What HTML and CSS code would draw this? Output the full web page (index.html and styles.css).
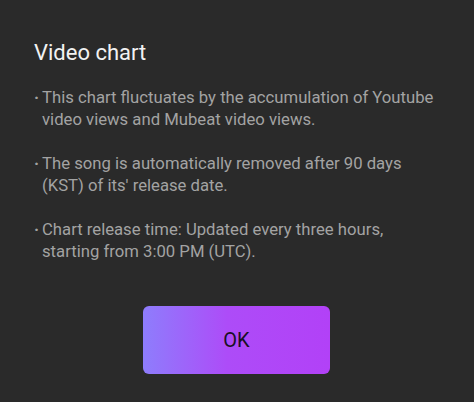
FILE: index.html
```html
<!DOCTYPE html>
<html lang="en">
<head>
    <meta charset="UTF-8">
    <meta name="viewport" content="width=device-width, initial-scale=1.0">
    <title>Video chart</title>
    <link rel="stylesheet" href="styles.css">
</head>
<body>
    <div class="dialog">
        <h1>Video chart</h1>
        <ul class="notes">
            <li><span class="dot">·</span><span>This chart fluctuates by the accumulation of Youtube video views and Mubeat video views.</span></li>
            <li><span class="dot">·</span><span>The song is automatically removed after 90 days (KST) of its' release date.</span></li>
            <li><span class="dot">·</span><span>Chart release time: Updated every three hours, starting from 3:00 PM (UTC).</span></li>
        </ul>
        <div class="actions">
            <button type="button" class="ok-btn">OK</button>
        </div>
    </div>
</body>
</html>
```

FILE: styles.css
```css
body {
    font-family: Roboto, "Noto Sans", sans-serif;
    background-color: #2a2a2a;
    color: #a3a3a3;
    margin: 0;
    padding: 0;
}
.dialog {
    padding: 39px 36px 0 34px;
}
h1 {
    margin: 0;
    font-size: 22px;
    font-weight: 400;
    color: #f2f2f2;
    line-height: 28px;
}
.notes {
    list-style: none;
    margin: 20px 0 0 0;
    padding: 0;
    font-size: 16.7px;
    line-height: 22px;
}
.notes li {
    display: flex;
    margin-bottom: 22px;
}
.dot {
    width: 8px;
    flex: none;
    font-weight: 700;
}
.actions {
    padding-left: 109px;
    margin-top: 43px;
}
.ok-btn {
    width: 187px;
    height: 68px;
    border: none;
    border-radius: 6px;
    background: linear-gradient(90deg, #8e7dfc 0%, #ad4cf8 45%, #b241f7 100%);
    font-family: Roboto, "Noto Sans", sans-serif;
    font-size: 20px;
    color: #1a1025;
}
```
